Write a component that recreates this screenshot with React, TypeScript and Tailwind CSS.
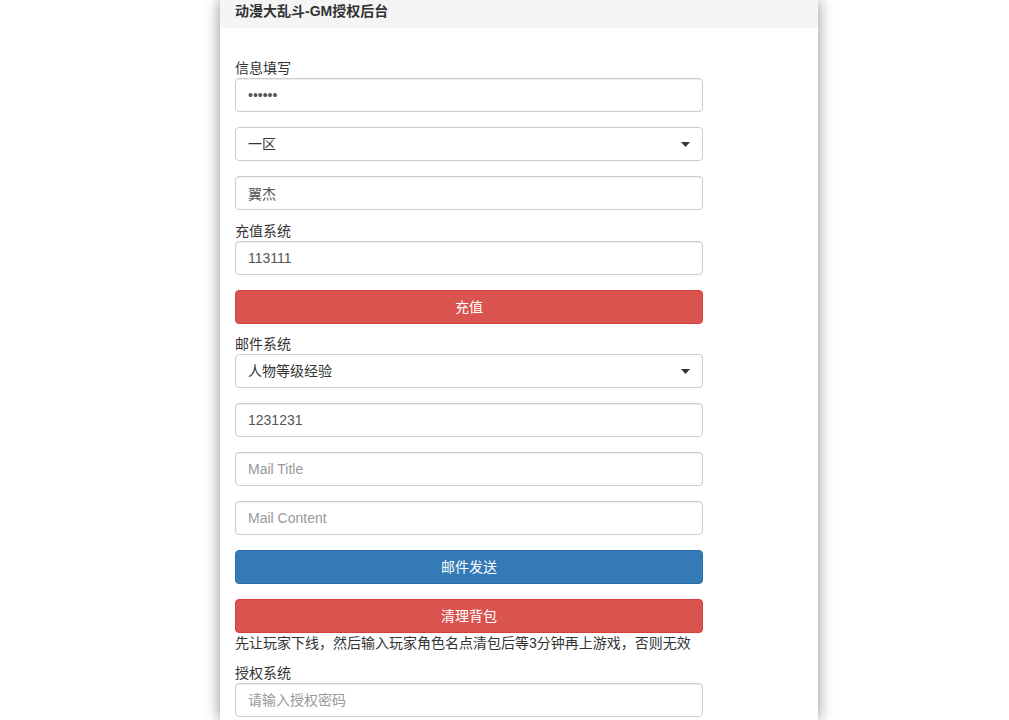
import React from "react";

const font = { fontFamily: '"Liberation Sans", "Noto Sans CJK SC", sans-serif' };

function Input({ value, placeholder, type = "text" }: { value?: string; placeholder?: string; type?: string }) {
  return (
    <input
      type={type}
      defaultValue={value}
      placeholder={placeholder}
      className="block w-full h-[34px] px-[12px] border border-[#ccc] rounded-[4px] text-[14px] text-[#555] placeholder:text-[#999] bg-white shadow-[inset_0_1px_1px_rgba(0,0,0,0.075)] outline-none"
      style={font}
    />
  );
}

function Select({ value }: { value: string }) {
  return (
    <div className="flex items-center justify-between w-full h-[34px] pl-[12px] pr-[12px] border border-[#ccc] rounded-[4px] text-[14px] text-[#333] bg-white">
      <span>{value}</span>
      <svg width="9" height="5" viewBox="0 0 9 5">
        <path d="M0 0 H9 L4.5 5 Z" fill="#333" />
      </svg>
    </div>
  );
}

function Button({ children, color }: { children: React.ReactNode; color: "red" | "blue" }) {
  const cls =
    color === "red"
      ? "bg-[#d9534f] border-[#d43f3a]"
      : "bg-[#337ab7] border-[#2e6da4]";
  return (
    <button
      className={`block w-full h-[34px] border rounded-[4px] text-white text-[14px] ${cls}`}
      style={font}
    >
      {children}
    </button>
  );
}

function Label({ children, className = "" }: { children: React.ReactNode; className?: string }) {
  return <div className={`text-[14px] leading-[20px] pt-[2px] text-[#333] ${className}`}>{children}</div>;
}

export default function App() {
  return (
    <div className="w-full min-h-screen bg-white overflow-hidden" style={font}>
      <div className="ml-[220px] w-[598px] min-h-[720px] bg-white shadow-[0_0_14px_rgba(0,0,0,0.45)]">
        <div className="h-[28px] bg-[#f5f5f5] rounded-b-[4px] px-[15px] flex items-center">
          <span className="text-[14px] font-bold text-[#333] leading-[20px] -mt-[6px]">动漫大乱斗-GM授权后台</span>
        </div>
        <div className="px-[15px] w-[498px]">
          <Label className="mt-[28px]">信息填写</Label>
          <Input type="password" value="123456" />
          <div className="mt-[15px]">
            <Select value="一区" />
          </div>
          <div className="mt-[15px]">
            <Input value="翼杰" />
          </div>
          <Label className="mt-[9px]">充值系统</Label>
          <Input value="113111" />
          <div className="mt-[15px]">
            <Button color="red">充值</Button>
          </div>
          <Label className="mt-[8px]">邮件系统</Label>
          <Select value="人物等级经验" />
          <div className="mt-[15px]">
            <Input value="1231231" />
          </div>
          <div className="mt-[15px]">
            <Input placeholder="Mail Title" />
          </div>
          <div className="mt-[15px]">
            <Input placeholder="Mail Content" />
          </div>
          <div className="mt-[15px]">
            <Button color="blue">邮件发送</Button>
          </div>
          <div className="mt-[15px]">
            <Button color="red">清理背包</Button>
          </div>
          <div className="text-[14px] leading-[20px] text-[#333]">先让玩家下线，然后输入玩家角色名点清包后等3分钟再上游戏，否则无效</div>
          <Label className="mt-[8px]">授权系统</Label>
          <Input placeholder="请输入授权密码" />
        </div>
      </div>
    </div>
  );
}
